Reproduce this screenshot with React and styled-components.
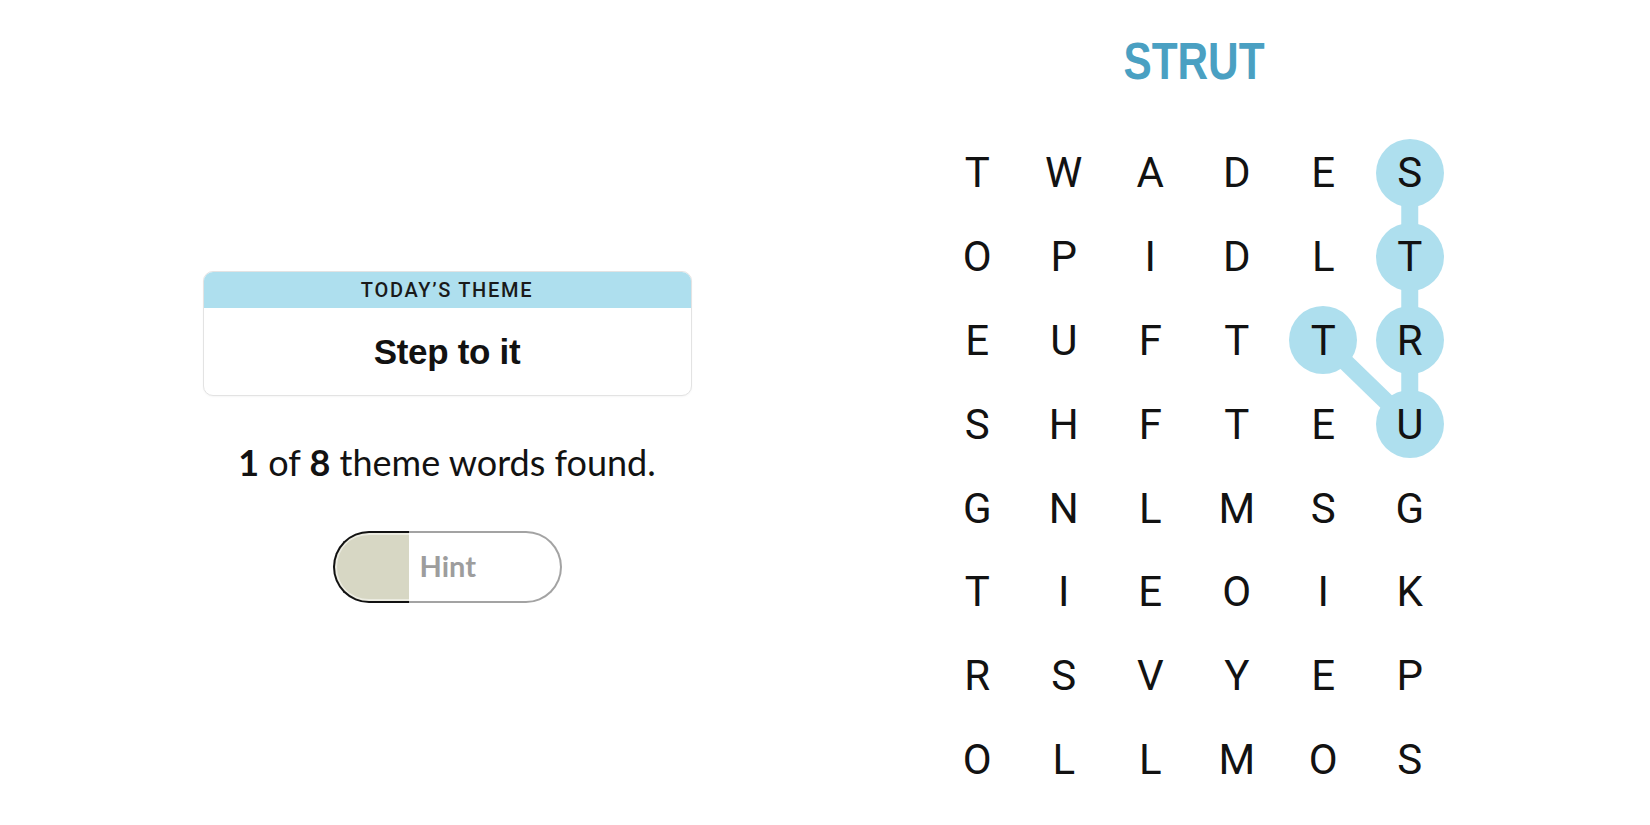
import React from 'react';
import styled, { createGlobalStyle } from 'styled-components';

const GlobalStyle = createGlobalStyle`
    html, body {
        margin: 0;
        padding: 0;
        background: #ffffff;
    }
    body {
        font-family: Roboto, "Liberation Sans", sans-serif;
        color: #121212;
    }
`;

const CELL_W = 86.5;
const CELL_H = 83.8;
const BLUE = '#aedfee';

const BOARD = [
    'TWADES',
    'OPIDLT',
    'EUFTTR',
    'SHFTEU',
    'GNLMSG',
    'TIEOIK',
    'RSVYEP',
    'OLLMOS',
];

// selected path: S-T-R-U plus the T leading into U
const SELECTED = [
    [0, 5],
    [1, 5],
    [2, 5],
    [3, 5],
    [2, 4],
];

const LINKS = [
    [[0, 5], [1, 5]],
    [[1, 5], [2, 5]],
    [[2, 5], [3, 5]],
    [[2, 4], [3, 5]],
];

const Page = styled.div`
    display: grid;
    grid-template-columns: 894px 599px;
    width: 1650px;
    height: 825px;
    overflow: hidden;
`;

const LeftColumn = styled.div`
    display: flex;
    flex-direction: column;
    align-items: center;
    padding-top: 271px;
`;

const ThemeCard = styled.div`
    width: 487px;
    border: 1px solid #e3e3e3;
    border-radius: 10px;
    overflow: hidden;
    background: #fff;
    box-shadow: 0 1px 2px rgba(0, 0, 0, 0.04);
`;

const ThemeHeader = styled.div`
    height: 36px;
    line-height: 36px;
    background: ${BLUE};
    text-align: center;
    font-family: Roboto, "Liberation Sans", sans-serif;
    font-weight: 500;
    font-size: 20px;
    letter-spacing: 1.7px;
    color: #1a1a1a;
`;

const ThemeBody = styled.div`
    height: 87px;
    line-height: 87px;
    text-align: center;
    font-family: "Liberation Sans", Arial, sans-serif;
    font-weight: 700;
    font-size: 35px;
    letter-spacing: -0.3px;
    color: #121212;
`;

const Progress = styled.p`
    margin: 45px 0 0;
    font-family: Lato, "Liberation Sans", sans-serif;
    font-size: 36px;
    line-height: 1.2;
    color: #121212;

    b {
        font-weight: 700;
    }
`;

const HintButton = styled.button`
    margin-top: 47px;
    display: flex;
    width: 229px;
    height: 72px;
    padding: 0;
    border: none;
    background: transparent;
    cursor: pointer;
`;

const HintFill = styled.span`
    width: 76px;
    height: 100%;
    box-sizing: border-box;
    border: 2.5px solid #121212;
    border-right: none;
    border-radius: 36px 0 0 36px;
    background: #d7d7c4;
    box-shadow: inset 2px 0 0 #ebebe0, inset 0 2px 0 #ebebe0, inset 0 -2px 0 #ebebe0;
`;

const HintRest = styled.span`
    flex: 1;
    height: 100%;
    box-sizing: border-box;
    border: 2px solid #a3a3a3;
    border-left: none;
    border-radius: 0 36px 36px 0;
    display: flex;
    align-items: center;
    padding: 0 0 3px 11px;
    font-family: Lato, "Liberation Sans", sans-serif;
    font-weight: 700;
    font-size: 29px;
    color: #9d9d9d;
`;

const RightColumn = styled.div`
    display: flex;
    flex-direction: column;
    align-items: center;
    padding-top: 37px;
`;

const Spangram = styled.h1`
    margin: 0;
    font-family: "Liberation Sans", Arial, sans-serif;
    font-weight: 700;
    font-size: 51px;
    line-height: 50px;
    color: #4aa0c2;
    transform: scaleX(0.83);
`;

const Board = styled.div`
    position: relative;
    margin-top: 44px;
    display: grid;
    grid-template-columns: repeat(6, ${CELL_W}px);
    grid-auto-rows: ${CELL_H}px;
`;

const Links = styled.svg`
    position: absolute;
    inset: 0;
    pointer-events: none;
    z-index: 0;
`;

const Cell = styled.div`
    position: relative;
    z-index: 1;
    display: flex;
    align-items: center;
    justify-content: center;
`;

const Letter = styled.span`
    width: 68px;
    height: 68px;
    border-radius: 50%;
    display: flex;
    align-items: center;
    justify-content: center;
    background: ${({ $selected }) => ($selected ? BLUE : 'transparent')};
    font-family: Roboto, "Liberation Sans", sans-serif;
    font-size: 42px;
    font-weight: 400;
    color: #121212;
`;

const isSelected = (r, c) => SELECTED.some(([sr, sc]) => sr === r && sc === c);
const cx = (c) => CELL_W / 2 + CELL_W * c;
const cy = (r) => CELL_H / 2 + CELL_H * r;

export default function App() {
    return (
        <>
            <GlobalStyle />
            <Page>
                <LeftColumn>
                    <ThemeCard>
                        <ThemeHeader>TODAY’S THEME</ThemeHeader>
                        <ThemeBody>Step to it</ThemeBody>
                    </ThemeCard>
                    <Progress>
                        <b>1</b> of <b>8</b> theme words found.
                    </Progress>
                    <HintButton>
                        <HintFill />
                        <HintRest>Hint</HintRest>
                    </HintButton>
                </LeftColumn>
                <RightColumn>
                    <Spangram>STRUT</Spangram>
                    <Board>
                        <Links width={CELL_W * 6} height={CELL_H * 8}>
                            {LINKS.map(([[r1, c1], [r2, c2]], i) => (
                                <line
                                    key={i}
                                    x1={cx(c1)}
                                    y1={cy(r1)}
                                    x2={cx(c2)}
                                    y2={cy(r2)}
                                    stroke={BLUE}
                                    strokeWidth="17"
                                />
                            ))}
                        </Links>
                        {BOARD.map((row, r) =>
                            row.split('').map((ch, c) => (
                                <Cell key={`${r}-${c}`}>
                                    <Letter $selected={isSelected(r, c)}>{ch}</Letter>
                                </Cell>
                            ))
                        )}
                    </Board>
                </RightColumn>
            </Page>
        </>
    );
}
